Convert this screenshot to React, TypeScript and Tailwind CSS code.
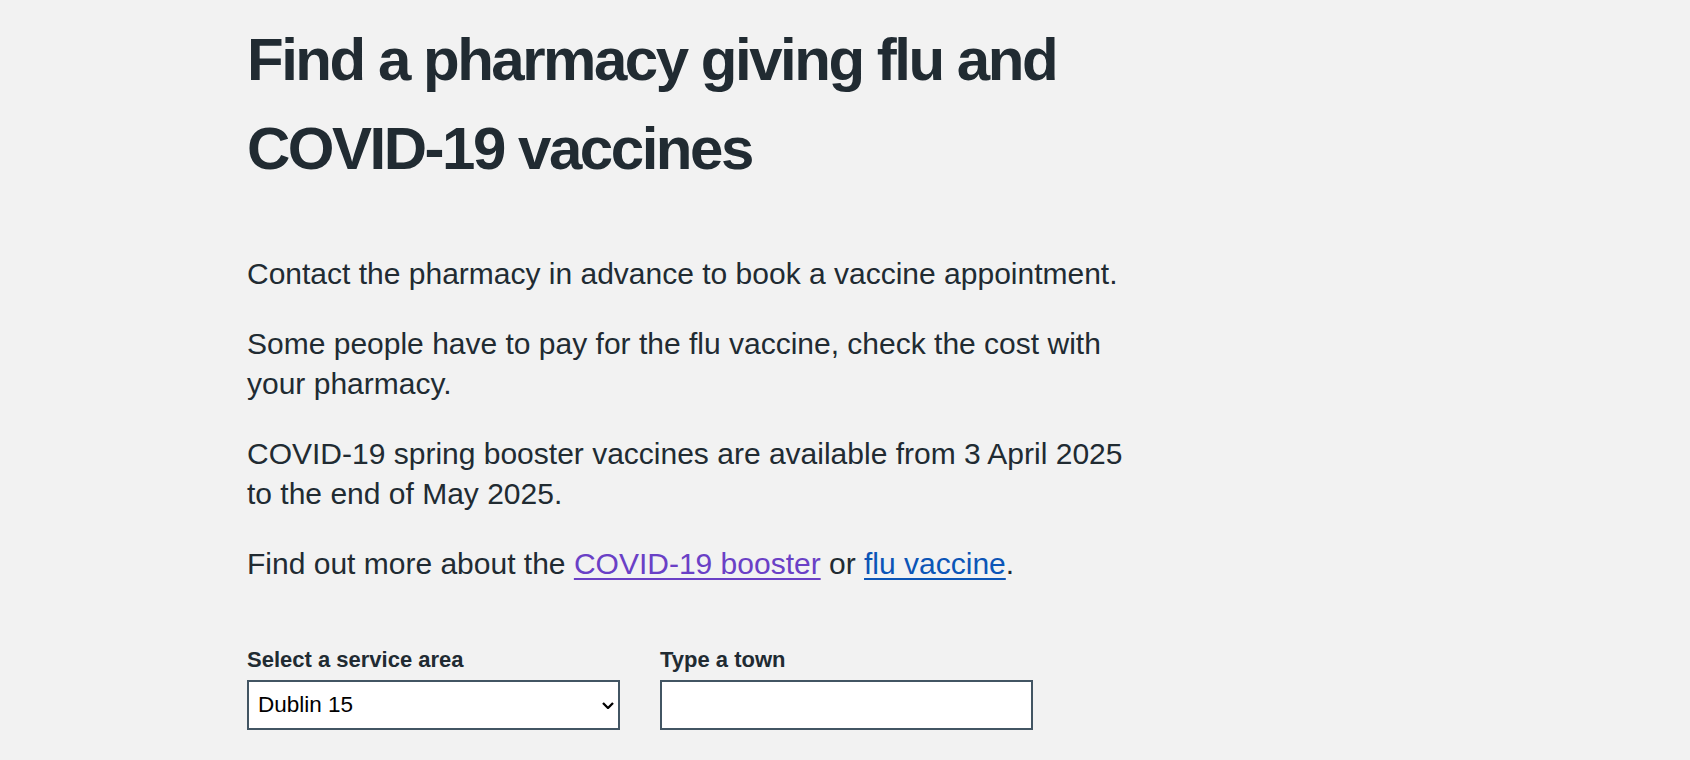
import React from "react";

export default function App() {
  return (
    <div
      className="min-h-[760px] w-full bg-[#f2f2f2] text-[#212b32]"
      style={{ fontFamily: '"Liberation Sans", Arial, sans-serif' }}
    >
      <div className="mx-auto w-[1196px] pt-[15px]">
        <div className="w-[885px]">
          <h1 className="mb-[61px] text-[60px] font-bold leading-[89px] tracking-[-2.48px]">
            Find a pharmacy giving flu and COVID-19 vaccines
          </h1>
          <p className="mb-[30px] text-[30px] leading-[40px]">
            Contact the pharmacy in advance to book a vaccine appointment.
          </p>
          <p className="mb-[30px] text-[30px] leading-[40px]">
            Some people have to pay for the flu vaccine, check the cost with your pharmacy.
          </p>
          <p className="mb-[30px] text-[30px] leading-[40px]">
            COVID-19 spring booster vaccines are available from 3 April 2025 to the end of May 2025.
          </p>
          <p className="text-[30px] leading-[40px]">
            Find out more about the{" "}
            <a
              href="#"
              className="text-[#6a40c6] underline decoration-2 underline-offset-[4px]"
            >
              COVID-19 booster
            </a>{" "}
            or{" "}
            <a
              href="#"
              className="text-[#0b55b7] underline decoration-2 underline-offset-[4px]"
            >
              flu vaccine
            </a>
            .
          </p>
          <div className="mt-[61px] flex gap-[40px]">
            <div className="flex w-[373px] flex-col">
              <label className="mb-[5px] text-[22px] font-bold leading-[30px]">
                Select a service area
              </label>
              <div className="relative">
                <select
                  defaultValue="Dublin 15"
                  className="h-[50px] w-full appearance-none rounded-none border-2 border-[#425563] bg-white pl-[9px] text-[22.5px] text-black outline-none"
                  style={{ fontFamily: '"Liberation Sans", Arial, sans-serif' }}
                >
                  <option>Dublin 15</option>
                </select>
                <svg
                  className="pointer-events-none absolute right-[6px] top-[22px]"
                  width="12"
                  height="7"
                  viewBox="0 0 12 7"
                  fill="none"
                >
                  <polyline
                    points="1,1 6,6 11,1"
                    stroke="#000"
                    strokeWidth="2.3"
                    strokeLinecap="butt"
                    strokeLinejoin="miter"
                  />
                </svg>
              </div>
            </div>
            <div className="flex w-[373px] flex-col">
              <label className="mb-[5px] text-[22px] font-bold leading-[30px]">
                Type a town
              </label>
              <input
                type="text"
                className="h-[50px] w-full rounded-none border-2 border-[#425563] bg-white px-[9px] text-[22.5px] text-black outline-none"
                style={{ fontFamily: '"Liberation Sans", Arial, sans-serif' }}
              />
            </div>
          </div>
        </div>
      </div>
    </div>
  );
}
